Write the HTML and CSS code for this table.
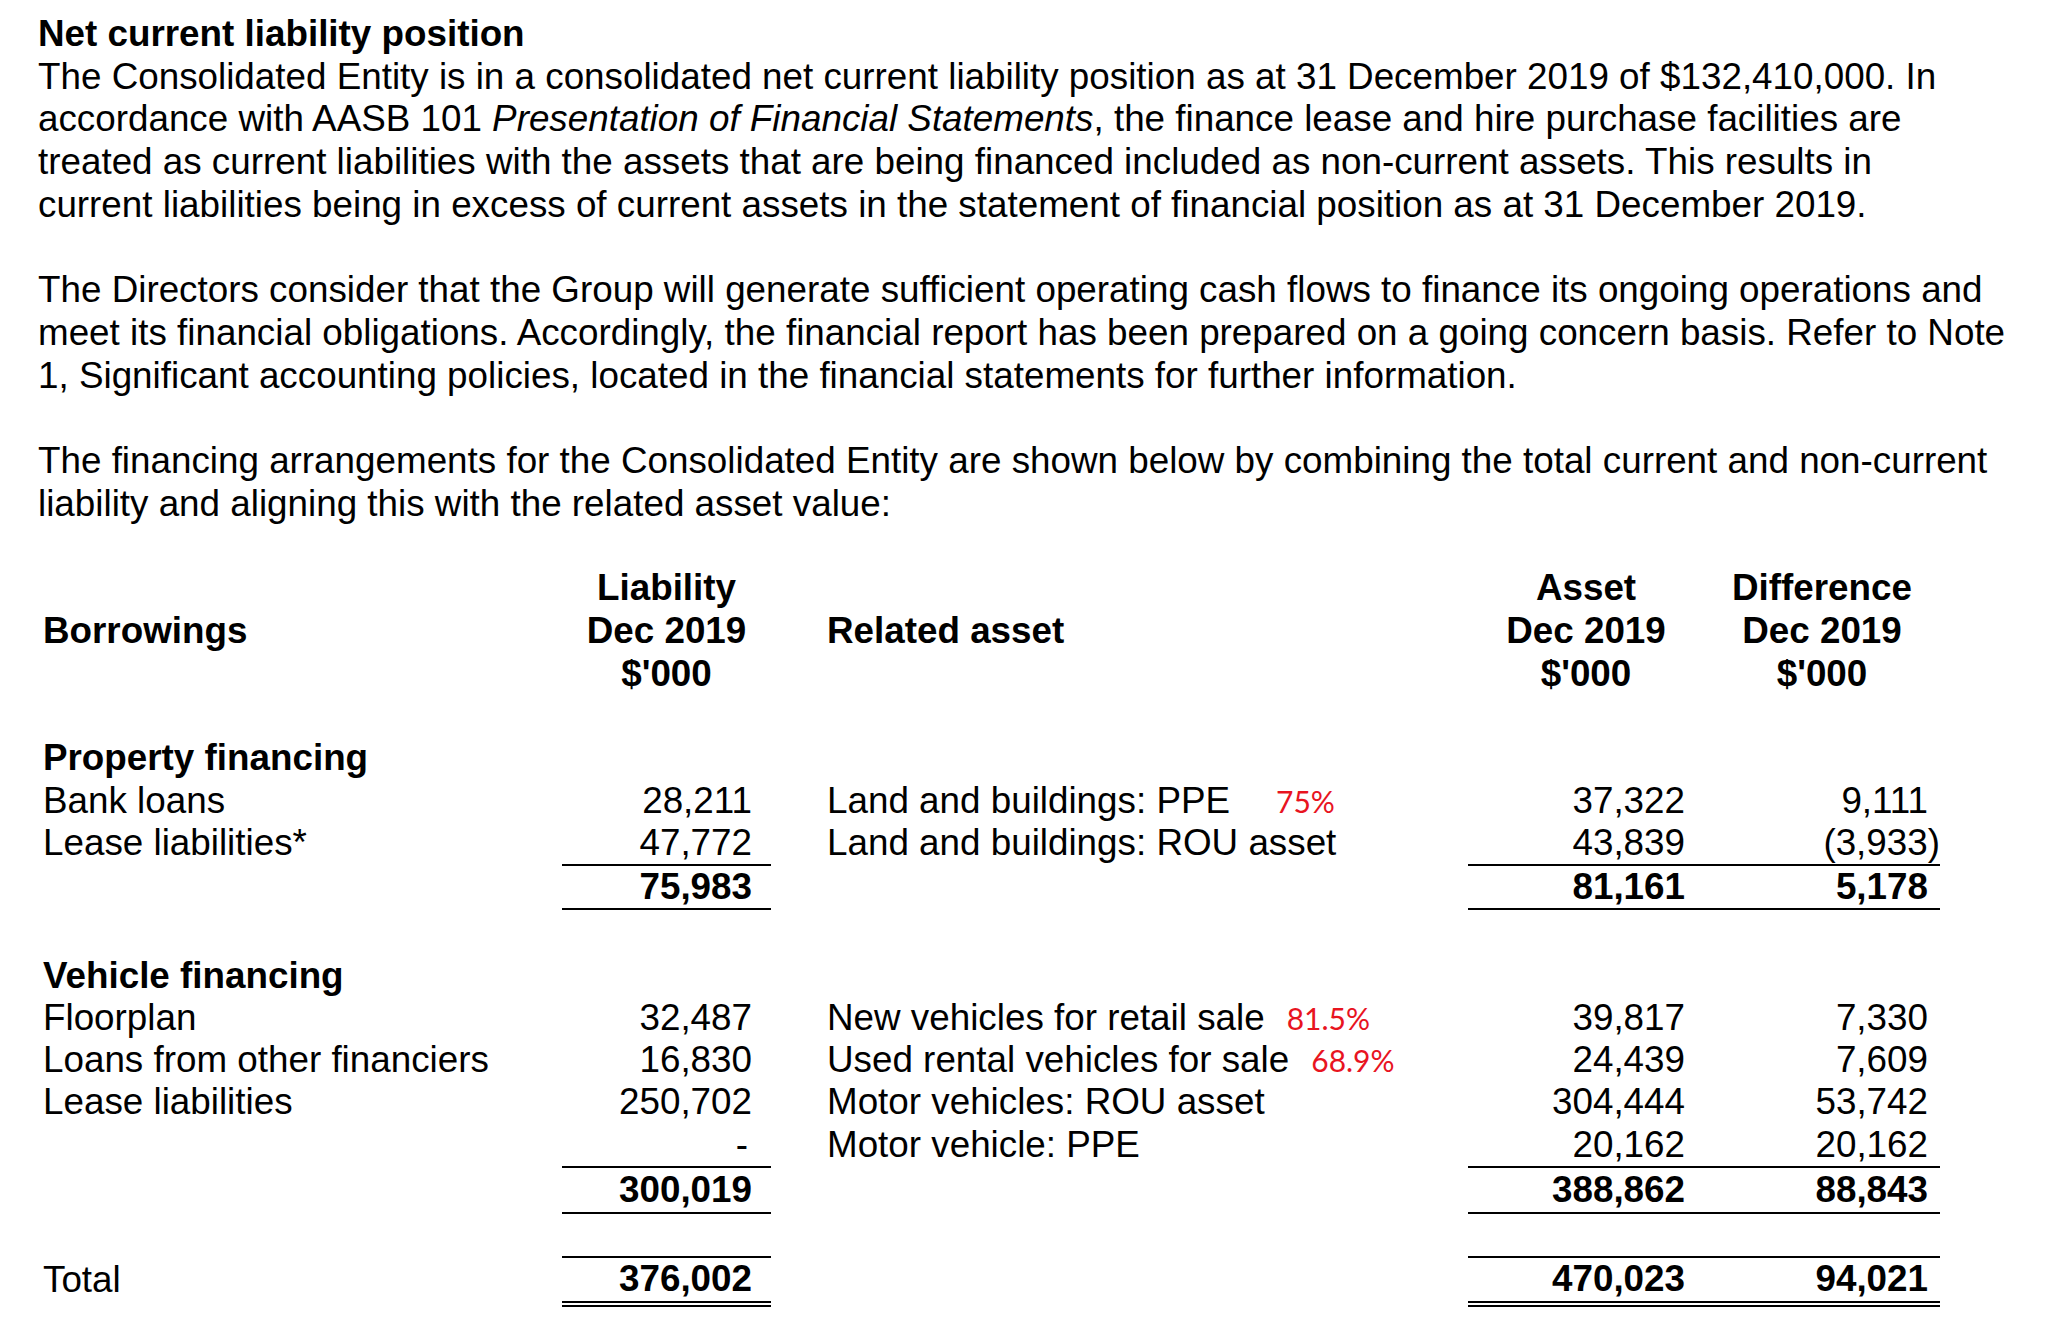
FILE: index.html
```html
<!DOCTYPE html>
<html>
<head>
<meta charset="utf-8">
<link rel="stylesheet" href="styles.css">
</head>
<body>
<div class="page">
  <h1 class="title">Net current liability position</h1>
  <p class="para">The Consolidated Entity is in a consolidated net current liability position as at 31 December 2019 of $132,410,000. In<br>accordance with AASB 101 <i>Presentation of Financial Statements</i>, the finance lease and hire purchase facilities are<br>treated as current liabilities with the assets that are being financed included as non-current assets. This results in<br>current liabilities being in excess of current assets in the statement of financial position as at 31 December 2019.</p>
  <p class="para">The Directors consider that the Group will generate sufficient operating cash flows to finance its ongoing operations and<br>meet its financial obligations. Accordingly, the financial report has been prepared on a going concern basis. Refer to Note<br>1, Significant accounting policies, located in the financial statements for further information.</p>
  <p class="para">The financing arrangements for the Consolidated Entity are shown below by combining the total current and non-current<br>liability and aligning this with the related asset value:</p>

  <table class="fin">
    <colgroup>
      <col class="c-borrow"><col class="c-liab"><col class="c-rel"><col class="c-asset"><col class="c-diff">
    </colgroup>
    <thead>
      <tr>
        <th class="lbl">Borrowings</th>
        <th class="hnum">Liability<br>Dec 2019<br>$'000</th>
        <th class="lbl rel">Related asset</th>
        <th class="hnum">Asset<br>Dec 2019<br>$'000</th>
        <th class="hnum">Difference<br>Dec 2019<br>$'000</th>
      </tr>
    </thead>
    <tbody>
      <tr class="blank"><td></td><td></td><td></td><td></td><td></td></tr>
      <tr><td class="sec">Property financing</td><td></td><td></td><td></td><td></td></tr>
      <tr><td>Bank loans</td><td class="num">28,211</td><td class="rel">Land and buildings: PPE<span class="pct pct-wide">75%</span></td><td class="num">37,322</td><td class="num diff">9,111</td></tr>
      <tr class="sub"><td>Lease liabilities*</td><td class="num ul">47,772</td><td class="rel">Land and buildings: ROU asset</td><td class="num ul">43,839</td><td class="num diff ul">(3,933<span class="rp">)</span></td></tr>
      <tr class="tot"><td></td><td class="num ul">75,983</td><td></td><td class="num ul">81,161</td><td class="num diff ul">5,178</td></tr>
      <tr class="blank wide"><td></td><td></td><td></td><td></td><td></td></tr>
      <tr><td class="sec">Vehicle financing</td><td></td><td></td><td></td><td></td></tr>
      <tr><td>Floorplan</td><td class="num">32,487</td><td class="rel">New vehicles for retail sale<span class="pct">81.5%</span></td><td class="num">39,817</td><td class="num diff">7,330</td></tr>
      <tr><td>Loans from other financiers</td><td class="num">16,830</td><td class="rel">Used rental vehicles for sale<span class="pct">68.9%</span></td><td class="num">24,439</td><td class="num diff">7,609</td></tr>
      <tr><td>Lease liabilities</td><td class="num">250,702</td><td class="rel">Motor vehicles: ROU asset</td><td class="num">304,444</td><td class="num diff">53,742</td></tr>
      <tr><td></td><td class="num ul dash">-</td><td class="rel">Motor vehicle: PPE</td><td class="num ul">20,162</td><td class="num diff ul">20,162</td></tr>
      <tr class="tot tall"><td></td><td class="num ul">300,019</td><td></td><td class="num ul">388,862</td><td class="num diff ul">88,843</td></tr>
      <tr class="blank"><td></td><td></td><td></td><td></td><td></td></tr>
      <tr class="tot grand"><td class="plain">Total</td><td class="num dbl">376,002</td><td></td><td class="num dbl">470,023</td><td class="num diff dbl">94,021</td></tr>
    </tbody>
  </table>
</div>
</body>
</html>
```
FILE: styles.css
```css
html, body {
  margin: 0;
  padding: 0;
  background: #ffffff;
}

.page {
  padding: 13px 0 0 38px;
  font-family: "Liberation Sans", Arial, sans-serif;
  font-size: 36.8px;
  line-height: 42.7px;
  color: #000;
  white-space: nowrap;
}

.title {
  margin: 0;
  font-size: 36.8px;
  font-weight: bold;
  line-height: 42.7px;
}

.para {
  margin: 0 0 42.7px 0;
}

.fin {
  margin-left: 5px;
  margin-top: -1px;
  border-collapse: collapse;
  table-layout: fixed;
  width: 1897px;
}

.c-borrow { width: 519px; }
.c-liab { width: 209px; }
.c-rel { width: 697px; }
.c-asset { width: 236px; }
.c-diff { width: 236px; }

.fin th,
.fin td {
  padding: 0;
  height: 42.2px;
  line-height: 42.2px;
  font-weight: normal;
  vertical-align: middle;
  text-align: left;
}

.fin th {
  font-weight: bold;
  line-height: 42.7px;
}

.fin th.hnum {
  text-align: center;
}

.fin tr.wide td {
  height: 44.5px;
}

.fin tr.tall td {
  height: 44.5px;
}

.fin .rel {
  padding-left: 56px;
}

.fin td.num {
  text-align: right;
  padding-right: 19px;
}

.fin td.diff {
  padding-right: 12px;
}

.fin td.dash {
  padding-right: 23px;
}

.rp {
  margin-right: -12px;
}

.fin td.sec {
  font-weight: bold;
}

.fin tr.tot td {
  font-weight: bold;
}

.fin tr.tot td.plain {
  font-weight: normal;
}

.fin td.ul {
  border-bottom: 2px solid #000;
}

.fin tr.grand td.num {
  border-top: 2px solid #000;
}

.fin td.dbl {
  border-bottom: 6px double #000;
}

.pct {
  font-family: "Lato", "Open Sans", sans-serif;
  font-size: 30px;
  color: #e8141f;
  margin-left: 22px;
}

.pct-wide {
  margin-left: 46px;
}
```
